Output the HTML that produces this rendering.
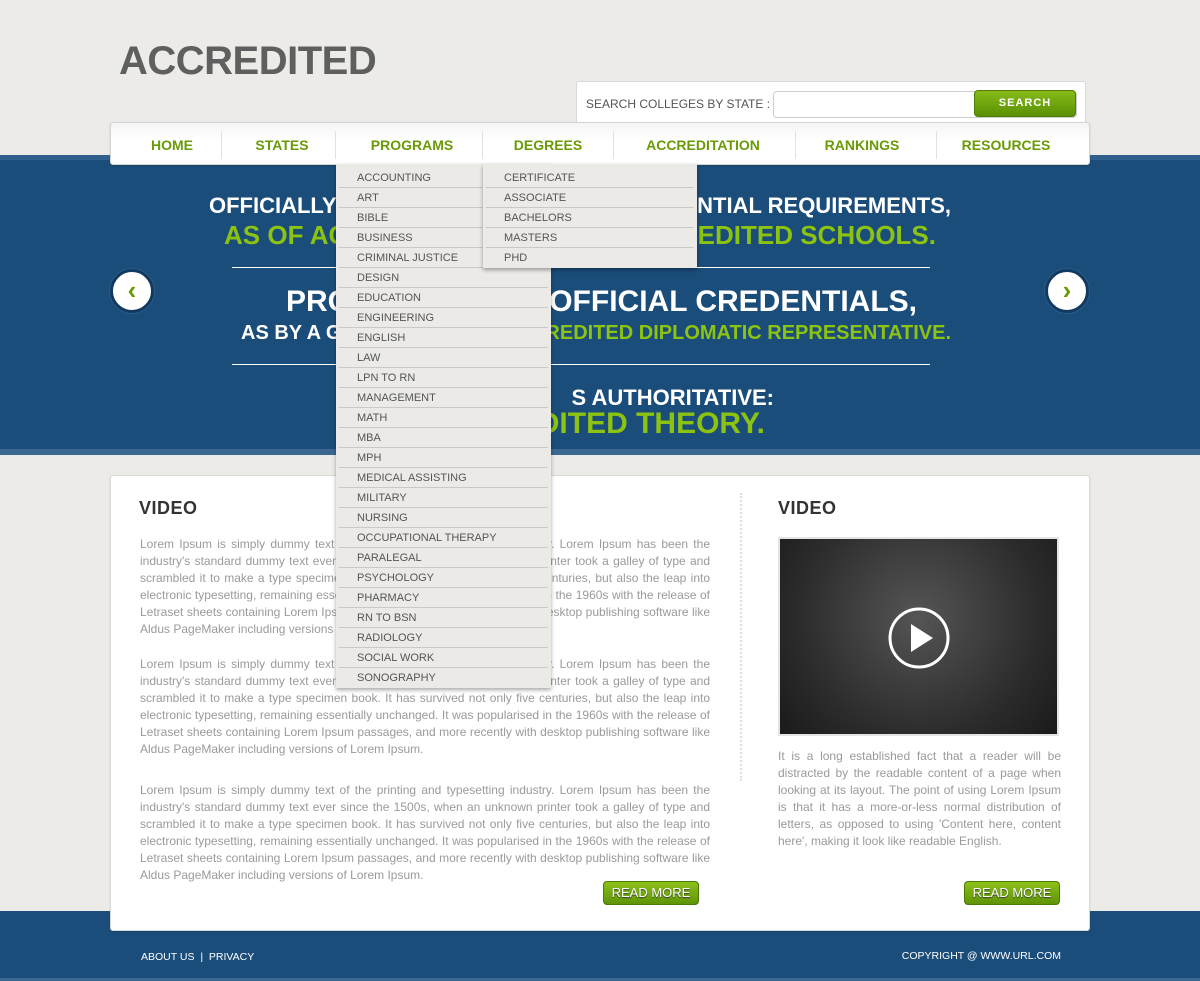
<!DOCTYPE html>
<html><head><meta charset="utf-8"><style>
*{margin:0;padding:0;box-sizing:border-box}
body{width:1200px;height:981px;background:#ecebe7;font-family:"Liberation Sans",sans-serif;position:relative;overflow:hidden}
.a{position:absolute;white-space:nowrap}
.logo{left:119px;top:39px;font-size:40px;font-weight:bold;color:#5f5f5f;letter-spacing:-0.5px}
.search{left:576px;top:81px;width:510px;height:44px;background:#fff;border:1px solid #d8d8d6;border-radius:3px}
.band{left:0;top:155px;width:1200px;height:300px;background:#1b4d7b;border-top:5px solid #2f5f8c;border-bottom:6px solid #3b6891}
.nav{left:110px;top:122px;width:980px;height:43px;background:linear-gradient(#f4f4f4,#fff 40%,#fff);border:1px solid #d4d4d4;border-radius:3px;box-shadow:0 1px 2px rgba(0,0,0,.15)}
.nav span{position:absolute;top:14px;font-size:14px;font-weight:bold;color:#6a9a05;transform:translateX(-50%)}
.sep{position:absolute;top:8px;width:1px;height:28px;background:#e2e2e2}
.w{color:#fff;font-weight:bold}.g{color:#8cc310;font-weight:bold}
.hr{height:1px;background:#fff;left:232px;width:698px}
.arrow{width:44px;height:44px;border-radius:50%;background:#fff;border:3px solid #123a60;box-shadow:0 0 0 1px #2a5a88;color:#6a9a05;font-size:26px;font-weight:bold;text-align:center;line-height:36px}
.dd{background:#ebeae6;box-shadow:0 2px 4px rgba(0,0,0,.35);padding:4px 3px 0 3px}
.dd div{height:20px;border-bottom:1px solid #c9c9c6;font-size:11px;color:#555;padding:3px 0 0 18px;line-height:14px}
.dd div:last-child{border-bottom:none}
.box{left:110px;top:475px;width:980px;height:456px;background:#fff;border:1px solid #d8d8d8;border-radius:3px;box-shadow:0 2px 2px rgba(0,0,0,.1)}
.foot{left:0;top:911px;width:1200px;height:70px;background:#1b4d7b;border-bottom:3px solid #3b6891}
h2{position:absolute;font-size:18px;font-weight:bold;color:#333;letter-spacing:.5px}
p.t{position:absolute;font-size:12px;line-height:17px;color:#9a9a9a;text-align:justify}
.btn{width:96px;height:24px;border-radius:4px;background:linear-gradient(#8cc01a,#5e9406);border:1px solid #4a7a05;color:#fff;font-size:13px;text-align:center;line-height:21px;text-shadow:0 1px 1px #333}
</style></head><body>
<div class="a logo">ACCREDITED</div>
<div class="a search">
 <div class="a" style="left:9px;top:15px;font-size:12px;color:#555">SEARCH COLLEGES BY STATE :</div>
 <div class="a" style="left:196px;top:9px;width:304px;height:27px;border:1px solid #ccc;border-radius:4px;background:#fff"></div>
 <div class="a" style="left:397px;top:8px;width:102px;height:27px;border-radius:4px;background:linear-gradient(#86bb18,#5a9004);border:1px solid #4f7f06;color:#fff;font-size:11px;font-weight:bold;text-align:center;line-height:24px;letter-spacing:1px">SEARCH</div>
</div>
<div class="a band"></div>
<div class="a w" style="left:209px;top:193px;font-size:22px">OFFICIALLY</div>
<div class="a w" style="right:249px;top:193px;font-size:22px">ENTIAL REQUIREMENTS,</div>
<div class="a g" style="left:224px;top:220px;font-size:26px">AS OF ACC</div>
<div class="a g" style="right:264px;top:220px;font-size:26px">REDITED SCHOOLS.</div>
<div class="a hr" style="top:267px"></div>
<div class="a w" style="left:286px;top:285px;font-size:30px">PRO</div>
<div class="a w" style="right:283px;top:285px;font-size:30px">OFFICIAL CREDENTIALS,</div>
<div class="a w" style="left:241px;top:322px;font-size:20px">AS BY A G</div>
<div class="a g" style="right:249px;top:322px;font-size:20px">REDITED DIPLOMATIC REPRESENTATIVE.</div>
<div class="a hr" style="top:364px"></div>
<div class="a w" style="right:426px;top:385px;font-size:22px">S AUTHORITATIVE:</div>
<div class="a g" style="right:435px;top:407px;font-size:30px">DITED THEORY.</div>
<div class="a arrow" style="left:110px;top:269px">‹</div>
<div class="a arrow" style="left:1045px;top:269px">›</div>

<div class="a foot"></div>
<div class="a box"></div>
<h2 style="left:139px;top:498px">VIDEO</h2>
<h2 style="left:778px;top:498px">VIDEO</h2>
<p class="t" style="left:140px;top:536px;width:570px">Lorem Ipsum is simply dummy text of the printing and typesetting industry. Lorem Ipsum has been the industry's standard dummy text ever since the 1500s, when an unknown printer took a galley of type and scrambled it to make a type specimen book. It has survived not only five centuries, but also the leap into electronic typesetting, remaining essentially unchanged. It was popularised in the 1960s with the release of Letraset sheets containing Lorem Ipsum passages, and more recently with desktop publishing software like Aldus PageMaker including versions of Lorem Ipsum.</p>
<p class="t" style="left:140px;top:656px;width:570px">Lorem Ipsum is simply dummy text of the printing and typesetting industry. Lorem Ipsum has been the industry's standard dummy text ever since the 1500s, when an unknown printer took a galley of type and scrambled it to make a type specimen book. It has survived not only five centuries, but also the leap into electronic typesetting, remaining essentially unchanged. It was popularised in the 1960s with the release of Letraset sheets containing Lorem Ipsum passages, and more recently with desktop publishing software like Aldus PageMaker including versions of Lorem Ipsum.</p>
<p class="t" style="left:140px;top:782px;width:570px">Lorem Ipsum is simply dummy text of the printing and typesetting industry. Lorem Ipsum has been the industry's standard dummy text ever since the 1500s, when an unknown printer took a galley of type and scrambled it to make a type specimen book. It has survived not only five centuries, but also the leap into electronic typesetting, remaining essentially unchanged. It was popularised in the 1960s with the release of Letraset sheets containing Lorem Ipsum passages, and more recently with desktop publishing software like Aldus PageMaker including versions of Lorem Ipsum.</p>
<div class="a" style="left:740px;top:493px;height:288px;border-left:2px dotted #ddd"></div>
<div class="a" style="left:778px;top:537px;width:281px;height:199px;border:2px solid #e4e4e4;background:radial-gradient(circle at 50% 40%,#555,#2c2c2c 65%,#1a1a1a)">
 <svg class="a" style="left:107px;top:67px" width="64" height="64" viewBox="0 0 64 64"><circle cx="32" cy="32" r="29" fill="none" stroke="#fff" stroke-width="3"/><path d="M24 18 L46 32 L24 46Z" fill="#fff"/></svg>
</div>
<p class="t" style="left:778px;top:748px;width:283px">It is a long established fact that a reader will be distracted by the readable content of a page when looking at its layout. The point of using Lorem Ipsum is that it has a more-or-less normal distribution of letters, as opposed to using 'Content here, content here', making it look like readable English.</p>

<div class="a btn" style="left:603px;top:881px">READ MORE</div>
<div class="a btn" style="left:964px;top:881px">READ MORE</div>
<div class="a" style="left:141px;top:951px;font-size:10.5px;color:#fff">ABOUT US &nbsp;|&nbsp; PRIVACY</div>
<div class="a" style="right:139px;top:950px;font-size:10.5px;color:#fff">COPYRIGHT @ WWW.URL.COM</div>

<div class="a nav">
 <span style="left:61px">HOME</span><div class="sep" style="left:110px"></div>
 <span style="left:171px">STATES</span><div class="sep" style="left:224px"></div>
 <span style="left:301px">PROGRAMS</span><div class="sep" style="left:371px"></div>
 <span style="left:437px">DEGREES</span><div class="sep" style="left:502px"></div>
 <span style="left:592px">ACCREDITATION</span><div class="sep" style="left:684px"></div>
 <span style="left:751px">RANKINGS</span><div class="sep" style="left:825px"></div>
 <span style="left:895px">RESOURCES</span>
</div>
<div class="a dd" style="left:336px;top:164px;width:215px">
<div>ACCOUNTING</div><div>ART</div><div>BIBLE</div><div>BUSINESS</div><div>CRIMINAL JUSTICE</div><div>DESIGN</div><div>EDUCATION</div><div>ENGINEERING</div><div>ENGLISH</div><div>LAW</div><div>LPN TO RN</div><div>MANAGEMENT</div><div>MATH</div><div>MBA</div><div>MPH</div><div>MEDICAL ASSISTING</div><div>MILITARY</div><div>NURSING</div><div>OCCUPATIONAL THERAPY</div><div>PARALEGAL</div><div>PSYCHOLOGY</div><div>PHARMACY</div><div>RN TO BSN</div><div>RADIOLOGY</div><div>SOCIAL WORK</div><div>SONOGRAPHY</div>
</div>
<div class="a dd" style="left:483px;top:164px;width:214px">
<div>CERTIFICATE</div><div>ASSOCIATE</div><div>BACHELORS</div><div>MASTERS</div><div>PHD</div>
</div>
</body></html>
